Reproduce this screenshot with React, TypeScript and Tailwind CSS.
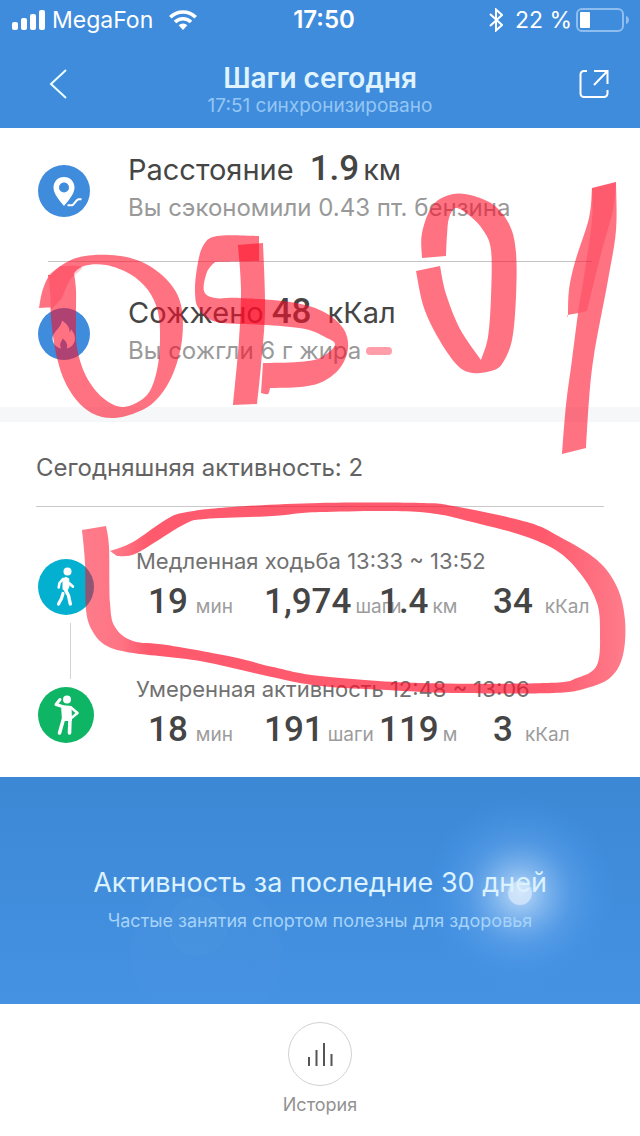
import type { ReactNode } from 'react'

type Point = [number, number]

interface Metric {
  value: string
  unit: string
}

interface Activity {
  id: string
  title: string
  icon: ReactNode
  metrics: Metric[]
}

const UNIT_GAPS = ['ml-2', 'ml-1', 'ml-1', 'ml-3']

const ACTIVITIES: Activity[] = [
  {
    id: 'walk',
    title: 'Медленная ходьба 13:33 ~ 13:52',
    icon: <WalkIcon />,
    metrics: [
      { value: '19', unit: 'мин' },
      { value: '1,974', unit: 'шаги' },
      { value: '1.4', unit: 'км' },
      { value: '34', unit: 'кКал' },
    ],
  },
  {
    id: 'moderate',
    title: 'Умеренная активность 12:48 ~ 13:06',
    icon: <StretchIcon />,
    metrics: [
      { value: '18', unit: 'мин' },
      { value: '191', unit: 'шаги' },
      { value: '119', unit: 'м' },
      { value: '3', unit: 'кКал' },
    ],
  },
]

export default function App() {
  return (
    <div className="relative flex min-h-screen flex-col overflow-hidden bg-white font-['Inter','Noto_Sans',sans-serif]">
      <div className="bg-[#408cdc]">
        <StatusBar />
        <Header />
      </div>

      <main className="flex flex-col">
        <section>
          <SummaryRow
            icon={<DistanceIcon />}
            label="Расстояние"
            value="1.9"
            unit="км"
            hint="Вы сэкономили 0.43 пт. бензина"
            gaps="ml-4 mr-1"
          />
          <hr className="mx-12 mt-px mb-[9px] border-[#c4c4c4]" />
          <SummaryRow
            icon={<FlameIcon />}
            label="Сожжено"
            value="48"
            unit="кКал"
            hint="Вы сожгли 6 г жира"
            gaps="ml-2 mr-4"
          />
        </section>

        <div className="mt-1 h-[15px] bg-[#f5f7f9]" />

        <section className="px-9">
          <h2 className="border-b border-[#c8c8c8] pt-[30px] pb-[22px] text-[24px] leading-8 text-[#636363]">
            Сегодняшняя активность: 2
          </h2>
          <ul className="pt-10 pl-0.5">
            {ACTIVITIES.map((activity, index) => (
              <ActivityRow
                key={activity.id}
                activity={activity}
                last={index === ACTIVITIES.length - 1}
              />
            ))}
          </ul>
        </section>

        <Banner />
      </main>

      <footer className="flex justify-center pt-[18px] pb-4">
        <button type="button" className="flex flex-col items-center gap-[7px]">
          <span className="flex size-16 items-center justify-center rounded-full border border-[#d2d2d2]">
            <svg viewBox="0 0 28 28" className="size-7" aria-hidden="true">
              <path
                d="M3 17v9M10.500 10v16M18 3v23M25.500 14v12"
                fill="none"
                stroke="#555"
                strokeWidth="2"
              />
            </svg>
          </span>
          <span className="text-[18px] leading-6 text-[#929292]">История</span>
        </button>
      </footer>

      <MarkerNotes />
    </div>
  )
}

function StatusBar() {
  return (
    <div className="grid h-10 grid-cols-[1fr_auto_1fr] items-center pr-2.5 pl-3 text-[23px] text-white">
      <div className="flex items-center">
        <svg viewBox="0 0 34 20" className="h-5 w-[34px]" aria-hidden="true">
          <g fill="currentColor">
            <rect x="0" y="12" width="6" height="8" rx="2" />
            <rect x="9" y="8" width="6" height="12" rx="2" />
            <rect x="18" y="4" width="6" height="16" rx="2" />
            <rect x="27" y="0" width="6" height="20" rx="2" />
          </g>
        </svg>
        <span className="ml-1.5">MegaFon</span>
        <svg viewBox="0 0 28 20" className="ml-4 h-5 w-7" aria-hidden="true">
          <g fill="none" stroke="currentColor" strokeWidth="3.600">
            <path d="M1.300 7.200a18 18 0 0 1 25.400 0" />
            <path d="M6 12a11.400 11.400 0 0 1 16 0" />
          </g>
          <path d="M9.600 15.300a6.300 6.300 0 0 1 8.800 0L14 20z" fill="currentColor" />
        </svg>
      </div>
      <span className="ml-1.5 text-[24px] font-semibold">17:50</span>
      <div className="flex items-center justify-end">
        <svg viewBox="0 0 14 24" className="mr-3 h-6 w-[14px]" aria-hidden="true">
          <path
            d="M1 6l12 11-6 5.500V1.500L13 7 1 18"
            fill="none"
            stroke="currentColor"
            strokeWidth="2"
          />
        </svg>
        <span>22 %</span>
        <svg viewBox="0 0 54 24" className="ml-1 h-6 w-[54px]" aria-hidden="true">
          <rect
            x="1"
            y="1"
            width="46"
            height="22"
            rx="5"
            fill="none"
            stroke="#8ebdf0"
            strokeWidth="2"
          />
          <path d="M50 8c4 1 4 7 0 8z" fill="#8ebdf0" />
          <rect x="4" y="4" width="10" height="16" rx="1" fill="#fff" />
        </svg>
      </div>
    </div>
  )
}

function Header() {
  return (
    <header className="grid h-[88px] grid-cols-[1fr_auto_1fr] items-center px-[26px]">
      <button
        type="button"
        aria-label="Назад"
        className="ml-2 flex size-12 items-center justify-center"
      >
        <svg viewBox="0 0 20 32" className="h-8 w-5 text-[#eaffff]" aria-hidden="true">
          <path d="M18 2L3 16l15 14" fill="none" stroke="currentColor" strokeWidth="2" />
        </svg>
      </button>
      <div className="pt-3 text-center">
        <h1 className="text-[28px] leading-8 font-semibold text-[#e0f4ff]">Шаги сегодня</h1>
        <p className="text-[19px] leading-6 text-[#94c6f4]">17:51 синхронизировано</p>
      </div>
      <button
        type="button"
        aria-label="Поделиться"
        className="flex size-10 items-center justify-center justify-self-end"
      >
        <svg viewBox="0 0 30 30" className="size-[30px] text-white" aria-hidden="true">
          <g fill="none" stroke="currentColor" strokeWidth="2">
            <path d="M8 2H5a3.500 3.500 0 0 0-3.500 3.500v19A3.500 3.500 0 0 0 5 28h20a3.500 3.500 0 0 0 3.500-3.500V21" />
            <path d="M15 2h13.500v13M28 2.500L15 16" />
          </g>
        </svg>
      </button>
    </header>
  )
}

function SummaryRow({
  icon,
  label,
  value,
  unit,
  hint,
  gaps,
}: {
  icon: ReactNode
  label: string
  value: string
  unit: string
  hint: string
  gaps: string
}) {
  return (
    <div className="flex gap-[38px] px-[38px] pt-5 pb-9">
      <div className="mb-[7px] shrink-0 self-end">{icon}</div>
      <div className="whitespace-nowrap">
        <p className="text-[29px] leading-[44px] text-[#454545]">
          {label}
          <strong
            className={`font-['Roboto','Inter',sans-serif] text-[35px] leading-none font-medium ${gaps}`}
          >
            {value}
          </strong>
          {unit}
        </p>
        <p className="text-[24px] leading-8 text-[#999]">{hint}</p>
      </div>
    </div>
  )
}

function ActivityRow({ activity, last }: { activity: Activity; last: boolean }) {
  return (
    <li className="flex h-32 gap-[42px] last:h-[102px]">
      <div className="flex shrink-0 flex-col items-center pt-3">
        {activity.icon}
        {!last && <span className="mt-2 ml-2 h-14 w-px shrink-0 bg-[#d4d4d4]" />}
      </div>
      <div className="flex-1 whitespace-nowrap">
        <h3 className="text-[22px] leading-7 text-[#717171]">{activity.title}</h3>
        <dl className="grid grid-cols-[116px_115px_114px_1fr] pl-3">
          {activity.metrics.map((metric, index) => (
            <div key={metric.unit} className="flex items-baseline">
              <dd className="font-['Roboto','Inter',sans-serif] text-[35px] leading-[54px] font-medium text-[#454545]">
                {metric.value}
              </dd>
              <dt className={`text-[19px] text-[#9c9c9c] ${UNIT_GAPS[index]}`}>{metric.unit}</dt>
            </div>
          ))}
        </dl>
      </div>
    </li>
  )
}

function Banner() {
  return (
    <a
      href="#activity"
      className="relative flex h-[227px] flex-col items-center justify-center gap-2 bg-linear-to-b from-[#3c88d5] to-[#4592e3] pt-4 text-center"
    >
      <svg
        viewBox="0 0 640 227"
        preserveAspectRatio="xMidYMid slice"
        className="absolute inset-0 size-full"
        aria-hidden="true"
      >
        <defs>
          <radialGradient id="glow">
            <stop offset="0" stopColor="#d4e8ff" stopOpacity="0.85" />
            <stop offset="0.2" stopColor="#b4d6fa" stopOpacity="0.65" />
            <stop offset="0.55" stopColor="#6aaaf0" stopOpacity="0.4" />
            <stop offset="0.8" stopColor="#4a98ea" stopOpacity="0.3" />
            <stop offset="1" stopColor="#4595e6" stopOpacity="0" />
          </radialGradient>
        </defs>
        <circle cx="520" cy="116" r="96" fill="url(#glow)" />
        <circle cx="520" cy="116" r="12" fill="#dcebfc" fillOpacity="0.7" />
        <circle cx="198" cy="149" r="30" fill="#fff" fillOpacity="0.02" />
        <circle cx="206" cy="176" r="76" fill="#fff" fillOpacity="0.01" />
      </svg>
      <span className="relative text-[27px] leading-9 text-[#dcf2ff]">
        Активность за последние 30 дней
      </span>
      <span className="relative text-[18px] leading-6 text-[#a6d3f9]">
        Частые занятия спортом полезны для здоровья
      </span>
    </a>
  )
}

function DistanceIcon() {
  return (
    <svg viewBox="0 0 52 52" className="size-[52px]" aria-hidden="true">
      <circle cx="26" cy="26" r="26" fill="#408cdc" />
      <path
        d="M26 12c-6.300 0-10.500 4.800-10.500 10.500C15.500 29 22 36 26 41c4-5 10.500-12 10.500-18.500C36.500 16.800 32.300 12 26 12z"
        fill="#fff"
      />
      <circle cx="26" cy="22.500" r="5" fill="#408cdc" />
      <path
        d="M29.500 40.300h4c3 0 3.500-5 7-6h3"
        fill="none"
        stroke="#fff"
        strokeWidth="2"
      />
    </svg>
  )
}

function FlameIcon() {
  return (
    <svg viewBox="0 0 52 52" className="size-[52px]" aria-hidden="true">
      <circle cx="26" cy="26" r="26" fill="#408cdc" />
      <path
        d="M24 12.500c6 4 8 8 7.500 12 1-.8 1.300-2 1.500-3.200 2.500 2.700 4 6 4 9.200 0 5-3.500 8.800-8.200 10 1.300-4-.5-7.500-4.300-10-.5 3-4 4.500-1.300 10-5-1.200-8.700-5-8.700-10 0-7 8.800-10.500 9.500-18z"
        fill="#fff"
      />
    </svg>
  )
}

function WalkIcon() {
  return (
    <svg viewBox="0 0 56 56" className="size-14 shrink-0" aria-hidden="true">
      <circle cx="28" cy="28" r="28" fill="#04b0d0" />
      <circle cx="29.500" cy="12.500" r="4" fill="#fff" />
      <path d="M24.500 19.500L28 17.800l3.200 1.700.3 8-2 4.500-5-1.500z" fill="#fff" />
      <g fill="none" stroke="#fff" strokeLinecap="round" strokeLinejoin="round">
        <path d="M25 20l-3.500 4-.8 4.500" strokeWidth="2.600" />
        <path d="M31.500 24.500l3.300 3" strokeWidth="2.800" />
        <path d="M27 30l3.500 6.500L32.300 45" strokeWidth="3.400" />
        <path d="M25 34.500l-1.500 5-3 5.500" strokeWidth="3.200" />
      </g>
    </svg>
  )
}

function StretchIcon() {
  return (
    <svg viewBox="0 0 56 56" className="size-14 shrink-0" aria-hidden="true">
      <circle cx="28" cy="28" r="28" fill="#0eb564" />
      <circle cx="29" cy="12.500" r="4" fill="#fff" />
      <path d="M23 18l10.500 1 .5 15H24z" fill="#fff" />
      <g fill="none" stroke="#fff" strokeLinecap="round" strokeLinejoin="round">
        <path d="M24.500 19.500l-6.500-2 4-5" strokeWidth="3" />
        <path d="M33 20.500l6.500 5.500-5.500 4.500" strokeWidth="2.600" />
        <path d="M25.500 32l-4 14" strokeWidth="3.600" />
        <path d="M32 32l-.5 14" strokeWidth="3.600" />
      </g>
    </svg>
  )
}

// Catmull-Rom spline through the points, written as cubic curves.
// A point given twice in a row makes a sharp corner.
function spline(points: Point[]) {
  return points
    .slice(1)
    .map((end, i) => {
      const start = points[i]
      const before = points[i - 1] ?? start
      const after = points[i + 2] ?? end
      const c1 = [start[0] + (end[0] - before[0]) / 6, start[1] + (end[1] - before[1]) / 6]
      const c2 = [end[0] - (after[0] - start[0]) / 6, end[1] - (after[1] - start[1]) / 6]
      return `C${c1.join(' ')} ${c2.join(' ')} ${end.join(' ')}`
    })
    .join('')
}

function ribbon(outer: Point[], inner: Point[]) {
  return `M${outer[0].join(' ')}${spline(outer)}L${inner[0].join(' ')}${spline(inner)}Z`
}

const ZERO_LEFT = ribbon(
  [
    [48, 275], [50, 300], [52, 328], [57, 358], [66, 384], [82, 406], [102, 417], [126, 416],
    [153, 403], [172, 376], [182, 340], [181, 305], [168, 281], [142, 262], [110, 255],
    [76, 258], [52, 273], [43, 289], [39, 308],
  ],
  [
    [55, 307], [62, 296], [72, 276], [84, 266], [106, 265], [130, 274], [148, 290], [158, 312],
    [160, 340], [157, 370], [147, 395], [124, 407], [103, 398], [86, 376], [77, 348], [76, 320],
    [76, 290], [74, 273],
  ],
)

const ZERO_LEFT_OVERLAP = ribbon(
  [[48, 275], [50, 290], [51, 310]],
  [[62, 298], [70, 280], [82, 267], [60, 266]],
)

const EIGHT_BAR = ribbon(
  [[238, 245], [241, 290], [239, 340], [233, 405]],
  [[257, 404], [261, 365], [265, 310], [263, 243]],
)

const EIGHT_LOOP = ribbon(
  [
    [259, 236], [217, 236], [203, 246], [197, 268], [195, 292], [199, 309], [217, 322],
    [267, 325], [305, 329], [325, 337], [335, 345], [320, 358], [298, 362], [263, 363],
  ],
  [
    [261, 393], [268, 394], [270, 388], [270, 388], [300, 387], [322, 382], [340, 368],
    [348, 348], [343, 328], [322, 311], [290, 302], [240, 298], [215, 298], [204, 291],
    [207, 272], [215, 262], [215, 262], [259, 261],
  ],
)

const ZERO_RIGHT = ribbon(
  [
    [422, 258], [422, 233], [433, 205], [453, 194], [474, 196], [495, 206], [510, 226],
    [516, 253], [516, 297], [512, 340], [502, 364], [491, 371], [473, 373], [458, 366],
    [440, 341], [424, 308], [416, 271],
  ],
  [
    [440, 266], [446, 294], [460, 329], [481, 360], [481, 360], [488, 337], [491, 297],
    [491, 250], [483, 230], [470, 216], [456, 208], [449, 218], [447, 235], [446, 256],
  ],
)

const ONE = ribbon(
  [
    [592, 188], [589, 218], [575, 262], [569, 290], [568, 315], [568, 315], [578, 313],
    [578, 313], [572, 360], [566, 405], [562, 454],
  ],
  [[586, 448], [589, 400], [594, 355], [608, 280], [616, 230], [616, 182]],
)

const ONE_OVERLAP = ribbon(
  [[592, 188], [592, 220], [585, 270], [578, 313]],
  [[587, 311], [592, 290], [602, 250], [613, 210], [616, 182]],
)

const LOOP = ribbon(
  [
    [82, 530], [85, 563], [86, 610], [93, 632], [107, 646], [133, 653], [200, 661], [267, 676],
    [320, 686], [387, 690], [453, 693], [553, 693], [587, 688], [611, 677], [623, 655],
    [625, 620], [617, 587], [597, 560], [560, 537], [527, 522], [453, 506], [420, 503],
    [320, 503], [233, 507], [187, 512], [167, 519], [133, 542], [110, 551],
  ],
  [
    [117, 556], [137, 553], [183, 525], [205, 519], [273, 516], [320, 512], [420, 512],
    [480, 524], [527, 537], [560, 553], [583, 577], [597, 603], [600, 630], [597, 665],
    [577, 678], [547, 683], [420, 683], [320, 676], [273, 667], [233, 657], [167, 645],
    [133, 641], [115, 627], [110, 603], [109, 547], [106, 526],
  ],
)

function MarkerNotes() {
  return (
    <svg
      viewBox="0 0 640 1136"
      className="pointer-events-none absolute top-0 left-0 w-full"
      aria-hidden="true"
    >
      <defs>
        <linearGradient id="ink-loop" gradientUnits="userSpaceOnUse" x1="82" y1="0" x2="625" y2="0">
          <stop offset="0" stopColor="#fe0c28" stopOpacity="0.54" />
          <stop offset="0.07" stopColor="#fe0c28" stopOpacity="0.57" />
          <stop offset="0.12" stopColor="#fe0c28" stopOpacity="0.68" />
          <stop offset="0.85" stopColor="#fe0c28" stopOpacity="0.68" />
          <stop offset="1" stopColor="#fe0c28" stopOpacity="0.54" />
        </linearGradient>
      </defs>
      <g fill="#fe0c28" fillOpacity="0.58">
        <path d={ZERO_LEFT} />
        <path d={ZERO_LEFT_OVERLAP} fillOpacity="0.22" />
        <path d={EIGHT_LOOP} />
        <path d={EIGHT_BAR} />
        <path d={ZERO_RIGHT} />
        <path d={ONE} />
        <path d={ONE_OVERLAP} fillOpacity="0.22" />
        <path d={LOOP} fill="url(#ink-loop)" fillOpacity="1" />
        <rect x="366" y="347" width="26" height="8" rx="4" fillOpacity="0.4" />
      </g>
    </svg>
  )
}
